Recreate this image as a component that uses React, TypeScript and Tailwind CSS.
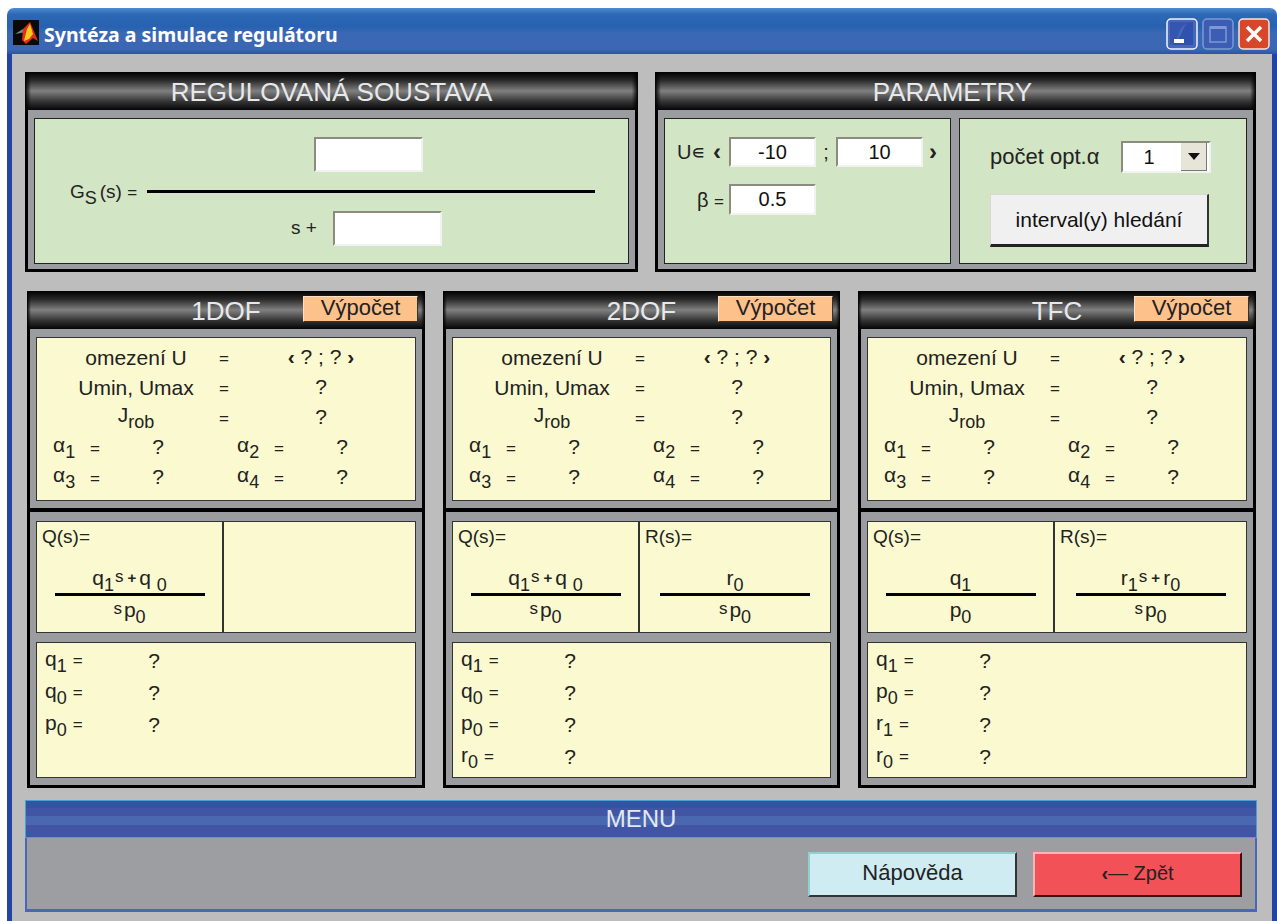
import type { ReactNode } from "react";

// Syntéza a simulace regulátoru: the controller design window

const FONT = "font-['Liberation_Sans',Arial,sans-serif]";
const HEADER_BG =
  "bg-[linear-gradient(90deg,#000_0%,transparent_1%,transparent_99%,#000_100%),linear-gradient(180deg,#000_0%,#2a2a2a_22%,#808080_50%,#333_78%,#050505_100%)]";

function Sub({ children }: { children: ReactNode }) {
  return <sub className="static align-[-6px] text-[18px] leading-none">{children}</sub>;
}

// small raised letter inside a fraction
function Up({ children }: { children: ReactNode }) {
  return <span className="mx-[1px] inline-block -translate-y-[3px] text-[17px]">{children}</span>;
}

// small plus sign between the terms of a fraction
function Plus() {
  return <span className="mx-[3px] inline-block -translate-y-[2px] text-[15px] font-bold">+</span>;
}

function Eq() {
  return <span className="text-[17px]">=</span>;
}

function Field({ value = "", className = "" }: { value?: string; className?: string }) {
  return (
    <input
      readOnly
      value={value}
      className={`border-2 border-t-[#8b8b80] border-l-[#8b8b80] border-r-[#f2f2f2] border-b-[#f2f2f2] bg-white text-center text-[20px] text-[#111] outline-none ${className}`}
    />
  );
}

function Panel({
  title,
  width,
  action,
  titleClass = "",
  children,
}: {
  title: string;
  width: string;
  action?: boolean;
  titleClass?: string;
  children: ReactNode;
}) {
  return (
    <section className={`flex flex-col ${width}`}>
      <div className={`relative flex h-[38px] items-center justify-center text-[26px] text-[#e6e8ea] ${HEADER_BG}`}>
        <span className={`pt-[3px] ${titleClass}`}>{title}</span>
        {action && (
          <button className="absolute right-[7px] top-[5px] h-[26px] w-[115px] border border-[#fde0c4] border-r-[#333] border-b-[#333] bg-[#fdc18c] pb-[5px] text-[22px] leading-none text-[#222]">
            Výpočet
          </button>
        )}
      </div>
      <div className="flex flex-1 flex-col border-x-[3px] border-b-[3px] border-black bg-[#9b9ca0]">{children}</div>
    </section>
  );
}

function Regulovana() {
  return (
    <Panel title="REGULOVANÁ SOUSTAVA" width="w-[613px] h-[200px]">
      <div className="mx-[6px] mt-[8px] flex h-[146px] flex-col border border-[#222] bg-[#d2e5c4] text-[#222]">
        <Field className="ml-[279px] mt-[18px] h-[35px] w-[109px]" />
        <div className="mt-[9px] flex h-[20px] items-center">
          <span className="ml-[35px] w-[77px] whitespace-nowrap pt-[7px] text-[19px] leading-none">
            G<Sub>S</Sub>
            <span className="ml-[3px]">(s)</span> <Eq />
          </span>
          <div className="h-[3px] w-[448px] bg-black" />
        </div>
        <div className="mt-[10px] flex items-center">
          <span className="ml-[256px] w-[42px] text-[19px]">s +</span>
          <Field className="h-[35px] w-[109px]" />
        </div>
      </div>
    </Panel>
  );
}

function Parametry() {
  return (
    <Panel title="PARAMETRY" width="w-[601px] h-[200px]" titleClass="pr-[6px]">
      <div className="mx-[6px] mt-[8px] flex h-[146px] gap-[8px]">
        <div className="w-[287px] border border-[#222] bg-[#d2e5c4] pl-[12px] pt-[18px] text-[20px] text-[#222]">
          <div className="flex items-center">
            <span className="w-[36px]">U∊</span>
            <span className="w-[16px] text-[24px] font-bold leading-none">‹</span>
            <Field value="-10" className="h-[30px] w-[87px]" />
            <span className="w-[20px] text-center">;</span>
            <Field value="10" className="h-[30px] w-[87px]" />
            <span className="ml-[6px] text-[24px] font-bold leading-none">›</span>
          </div>
          <div className="mt-[17px] flex items-center">
            <span className="ml-[20px] w-[32px]">
              β <Eq />
            </span>
            <Field value="0.5" className="h-[31px] w-[87px]" />
          </div>
        </div>
        <div className="flex-1 border border-[#222] bg-[#d2e5c4] pl-[30px] pt-[21px] text-[#222]">
          <div className="flex items-center">
            <span className="w-[131px] whitespace-nowrap text-[22px]">počet opt.α</span>
            <div className="flex h-[32px] w-[90px] items-center border-2 border-t-[#8b8b80] border-l-[#8b8b80] border-r-[#f2f2f2] border-b-[#f2f2f2] bg-white">
              <span className="w-[52px] text-center text-[20px] text-[#111]">1</span>
              <span className="ml-[6px] flex h-full w-[26px] items-center justify-center border-b border-r border-[#777] bg-[#e6e5d8]">
                <svg width="12" height="7" viewBox="0 0 12 7">
                  <path d="M0 0H12L6 7Z" fill="#111" />
                </svg>
              </span>
            </div>
          </div>
          <button className="mt-[21px] h-[53px] w-[219px] border border-b-[3px] border-r-[2px] border-[#d8d8d8] border-b-[#222] border-r-[#333] bg-[#f0f0f0] text-[21px] text-[#111]">
            interval(y) hledání
          </button>
        </div>
      </div>
    </Panel>
  );
}

function Alpha({ index }: { index: number }) {
  return (
    <div className="flex h-[30px] items-center">
      <span className="w-[37px] leading-none">
        α<Sub>{index}</Sub>
      </span>
      <span className="w-[10px]">
        <Eq />
      </span>
      <span className="w-[116px] text-center">?</span>
    </div>
  );
}

function ResultRow({ label, value }: { label: ReactNode; value: ReactNode }) {
  return (
    <div className="flex h-[30px] items-center">
      <span className="ml-[19px] w-[160px] text-center leading-none">{label}</span>
      <span className="w-[16px] text-center">
        <Eq />
      </span>
      <span className="w-[178px] text-center">{value}</span>
    </div>
  );
}

function Fraction({
  label,
  top,
  bottom,
  className = "",
}: {
  label?: string;
  top?: ReactNode;
  bottom?: ReactNode;
  className?: string;
}) {
  return (
    <div className={`flex flex-col items-center ${className}`}>
      {label && (
        <>
          <div className="flex h-[30px] w-full items-center pl-[5px] text-[19px]">{label}</div>
          <div className="mt-[15px] flex h-[26px] items-center whitespace-nowrap leading-none">{top}</div>
          <div className="h-[3px] w-[150px] bg-black" />
          <div className="flex h-[32px] items-center whitespace-nowrap leading-none">{bottom}</div>
        </>
      )}
    </div>
  );
}

type Coef = { name: string; sub: number };

const SP0 = (
  <>
    <span className="mr-[2px] -translate-y-[4px] text-[17px]">s</span>
    <span>
      p<Sub>0</Sub>
    </span>
  </>
);

const Q_FIRST_ORDER = (
  <span>
    q<Sub>1</Sub>
    <Up>s</Up>
    <Plus />q <Sub>0</Sub>
  </span>
);

const CONTROLLERS: {
  title: string;
  width: string;
  q: ReactNode;
  qDen: ReactNode;
  r?: ReactNode;
  rDen?: ReactNode;
  coefs: Coef[];
}[] = [
  {
    title: "1DOF",
    width: "w-[398px]",
    q: Q_FIRST_ORDER,
    qDen: SP0,
    coefs: [
      { name: "q", sub: 1 },
      { name: "q", sub: 0 },
      { name: "p", sub: 0 },
    ],
  },
  {
    title: "2DOF",
    width: "w-[397px]",
    q: Q_FIRST_ORDER,
    qDen: SP0,
    r: (
      <span>
        r<Sub>0</Sub>
      </span>
    ),
    rDen: SP0,
    coefs: [
      { name: "q", sub: 1 },
      { name: "q", sub: 0 },
      { name: "p", sub: 0 },
      { name: "r", sub: 0 },
    ],
  },
  {
    title: "TFC",
    width: "w-[398px]",
    q: (
      <span>
        q<Sub>1</Sub>
      </span>
    ),
    qDen: (
      <span>
        p<Sub>0</Sub>
      </span>
    ),
    r: (
      <span>
        r<Sub>1</Sub>
        <Up>s</Up>
        <Plus />r<Sub>0</Sub>
      </span>
    ),
    rDen: SP0,
    coefs: [
      { name: "q", sub: 1 },
      { name: "p", sub: 0 },
      { name: "r", sub: 1 },
      { name: "r", sub: 0 },
    ],
  },
];

function Controller({ c }: { c: (typeof CONTROLLERS)[number] }) {
  return (
    <Panel title={c.title} width={c.width} action>
      <div className="mx-[6px] mt-[8px] h-[164px] border border-[#333] bg-[#fbf9cf] pt-[4px] text-[21px] text-[#222]">
        <ResultRow
          label="omezení U"
          value={
            <>
              <b>‹</b> ? ; ? <b>›</b>
            </>
          }
        />
        <ResultRow label="Umin,  Umax" value="?" />
        <ResultRow
          label={
            <>
              J<Sub>rob</Sub>
            </>
          }
          value="?"
        />
        <div className="grid grid-cols-[184px_184px] pl-[16px]">
          <Alpha index={1} />
          <Alpha index={2} />
          <Alpha index={3} />
          <Alpha index={4} />
        </div>
      </div>
      <div className="mt-[7px] h-[4px] bg-black" />
      <div className="mx-[6px] mt-[9px] flex h-[112px] divide-x-2 divide-[#333] border border-[#333] bg-[#fbf9cf] text-[21px] text-[#222]">
        <Fraction label="Q(s)=" top={c.q} bottom={c.qDen} className="w-[187px]" />
        <Fraction label={c.r ? "R(s)=" : undefined} top={c.r} bottom={c.rDen} className="flex-1" />
      </div>
      <div className="mx-[6px] mt-[9px] h-[136px] border border-[#333] bg-[#fbf9cf] pl-[8px] pt-[2px] text-[21px] text-[#222]">
        {c.coefs.map((k, i) => (
          <div key={i} className="flex h-[32px] items-center">
            <span className="w-[88px] leading-none">
              {k.name}
              <Sub>{k.sub}</Sub>
              <span className="ml-[6px]">
                <Eq />
              </span>
            </span>
            <span className="w-[42px] text-center">?</span>
          </div>
        ))}
      </div>
    </Panel>
  );
}

function WindowButtons() {
  return (
    <div className="flex gap-[4px]">
      <svg width="32" height="32" viewBox="0 0 32 32">
        <rect x="1" y="1" width="30" height="30" rx="4" fill="#4667bd" stroke="#f1f5fc" strokeWidth="1.5" />
        <path d="M4 4H27Q15 6 13 15T4 27Z" fill="#3457ae" />
        <path d="M27 4V27H6Q14 20 17 12T27 4Z" fill="#2f52ae" />
        <rect x="8" y="21" width="10" height="4" fill="#fff" />
      </svg>
      <svg width="32" height="32" viewBox="0 0 32 32">
        <rect x="1" y="1" width="30" height="30" rx="4" fill="#3c5db4" stroke="#7f97d6" strokeWidth="1.5" />
        <rect x="8" y="9" width="16" height="15" fill="none" stroke="#7f97d6" strokeWidth="1.5" />
        <rect x="8" y="8" width="16" height="3" fill="#7f97d6" />
      </svg>
      <svg width="32" height="32" viewBox="0 0 32 32">
        <rect x="1" y="1" width="30" height="30" rx="4" fill="#d8472a" stroke="#f3e6e0" strokeWidth="1.5" />
        <path d="M9 9L23 23M23 9L9 23" stroke="#fff" strokeWidth="3.5" />
      </svg>
    </div>
  );
}

export default function App() {
  return (
    <div className={`h-[921px] overflow-hidden bg-white pl-[7px] pt-[8px] ${FONT}`}>
      <div className="w-[1270px]">
        {/* title bar */}
        <div className="flex h-[46px] items-center justify-between rounded-t-[7px] bg-[linear-gradient(180deg,#4f8ad2_0%,#2c68b4_14%,#2662b0_40%,#3a68b4_55%,#3b66b3_90%,#2f52a6_100%)] pl-[6px] pr-[7px] pt-[6px]">
          <div className="flex items-center gap-[5px]">
            <svg width="26" height="25" viewBox="0 0 26 25" className="-mt-[4px]">
              <rect width="26" height="25" fill="#0a0a0a" />
              <path d="M2 14L10 9L13 12L2 14Z" fill="#6f8f8f" />
              <path d="M10 9L17 2L25 21L20 18L13 24L9 20Z" fill="#e0301a" />
              <path d="M14 9L17 4L20 14L16 19L11 21Z" fill="#f8c81c" />
            </svg>
            <span className="mt-[2px] font-['Noto_Sans',sans-serif] text-[19.5px] font-bold leading-none text-white">
              Syntéza a simulace regulátoru
            </span>
          </div>
          <WindowButtons />
        </div>

        <div className="border-x-[5px] border-[#2444a4] bg-[#bdbdbd] pb-[9px] pt-[18px]">
          <div className="ml-[13px] flex gap-[17px]">
            <Regulovana />
            <Parametry />
          </div>

          <div className="ml-[15px] mt-[19px] flex h-[497px] gap-[18px]">
            {CONTROLLERS.map((c) => (
              <Controller key={c.title} c={c} />
            ))}
          </div>

          {/* menu strip */}
          <div className="ml-[13px] mt-[12px] w-[1232px]">
            <div className="flex h-[38px] items-center justify-center border border-[#4d9fd0] bg-[linear-gradient(180deg,#2f55a3_0%,#2f55a3_20%,#4255a5_20%,#4255a5_42%,#4a68b0_42%,#4a68b0_66%,#4255a5_66%,#4255a5_100%)] text-[24px] text-[#e4e8f2]">
              MENU
            </div>
            <div className="flex h-[74px] justify-end gap-[16px] border-x-2 border-b-[3px] border-[#4a66b5] bg-[#9d9ea2] pr-[13px] pt-[14px] text-[#222]">
              <button className="h-[45px] w-[209px] border-2 border-t-[#8fd0d0] border-l-[#8fd0d0] border-r-[#333] border-b-[#333] bg-[#ceecf2] pb-[4px] text-[22px]">
                Nápověda
              </button>
              <button className="h-[45px] w-[209px] border-2 border-t-[#ffb4b4] border-l-[#ffb4b4] border-r-[#3a1010] border-b-[#3a1010] bg-[#f25157] pb-[4px] text-[20px]">
                <b>‹</b>— Zpět
              </button>
            </div>
          </div>
        </div>
      </div>
    </div>
  );
}
